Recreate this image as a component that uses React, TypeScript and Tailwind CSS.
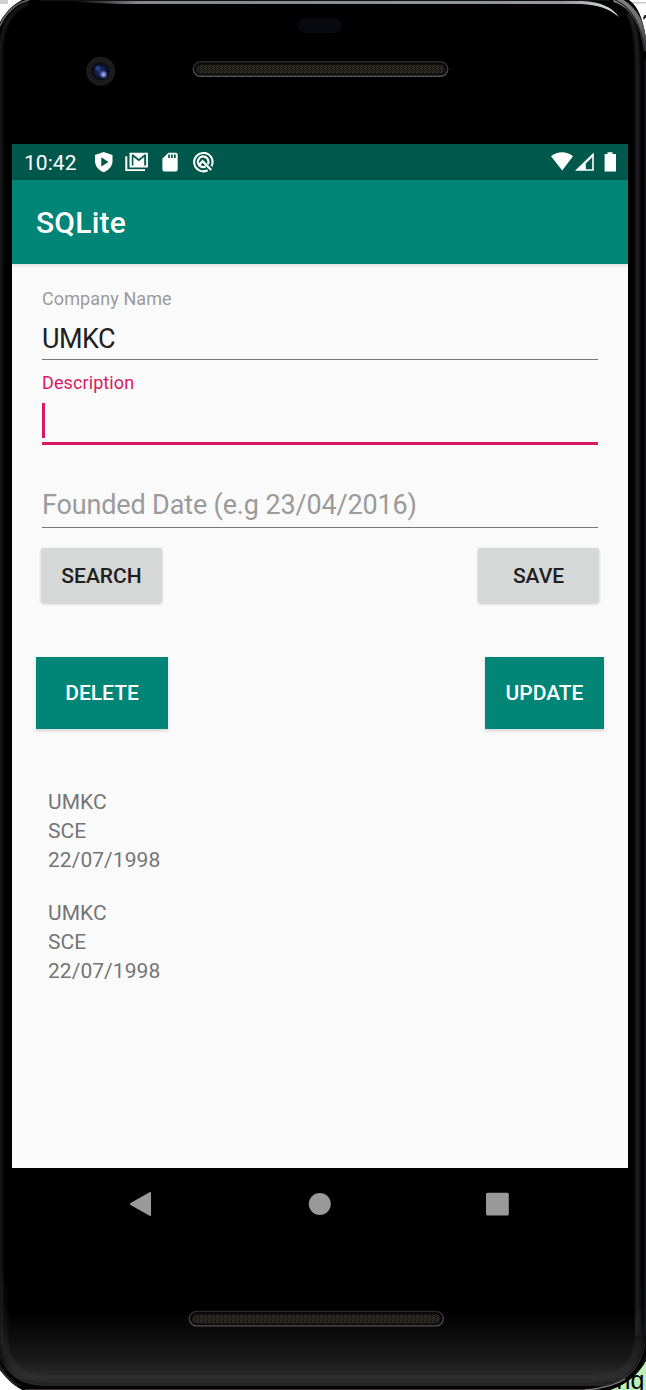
import type { ReactNode } from "react";

function Speaker({ x, y, w }: { x: number; y: number; w: number }) {
  return (
    <g>
      <rect x={x} y={y} width={w} height={14.5} rx={7.2} fill="#090909" stroke="url(#slotEdge)" strokeWidth="1.4" />
      <rect x={x + 3} y={y + 3} width={w - 6} height={9} rx={4.5} fill="url(#mesh)" />
    </g>
  );
}

function DeviceFrame() {
  return (
    <svg className="absolute inset-0" width="646" height="1390" viewBox="0 0 646 1390" aria-hidden="true">
      <defs>
        <linearGradient id="slotEdge" x1="0" y1="0" x2="0" y2="1">
          <stop offset="0" stopColor="#292929" />
          <stop offset="1" stopColor="#555452" />
        </linearGradient>
        <pattern id="mesh" width="4" height="4" patternUnits="userSpaceOnUse">
          <rect width="4" height="4" fill="#1b1916" />
          <path d="M0 0h1v1H0zM2 1h1v1H2zM0 2h1v1H0zM2 3h1v1H2z" fill="#383530" />
          <path d="M1 0h1v4H1z" fill="#26231f" />
        </pattern>
        <linearGradient id="bottomGlow" x1="0" y1="0" x2="0" y2="1">
          <stop offset="0" stopColor="#0a0a0a" stopOpacity="0" />
          <stop offset="0.3" stopColor="#0b0b0b" />
          <stop offset="0.65" stopColor="#191919" />
          <stop offset="0.88" stopColor="#2b2b2b" />
          <stop offset="1" stopColor="#1c1c1c" />
        </linearGradient>
        <linearGradient id="rimFade" gradientUnits="userSpaceOnUse" x1="0" y1="1270" x2="0" y2="1370">
          <stop offset="0" stopColor="#303030" stopOpacity="0" />
          <stop offset="1" stopColor="#303030" stopOpacity="0.5" />
        </linearGradient>
        <filter id="soft" filterUnits="userSpaceOnUse" x="-20" y="-20" width="686" height="1430">
          <feGaussianBlur stdDeviation="1.3" />
        </filter>
        <linearGradient id="topShine">
          <stop offset="0" stopColor="#888b8d" stopOpacity="0" />
          <stop offset="0.12" stopColor="#85888b" />
          <stop offset="0.9" stopColor="#96999c" />
          <stop offset="1" stopColor="#dde3e2" />
        </linearGradient>
        <linearGradient id="cornerShine" x1="0" y1="0" x2="1" y2="1">
          <stop offset="0" stopColor="#868686" />
          <stop offset="0.6" stopColor="#6d6b6c" />
          <stop offset="1" stopColor="#302f31" />
        </linearGradient>
        <radialGradient id="lens">
          <stop offset="0" stopColor="#26346f" />
          <stop offset="0.6" stopColor="#121a43" />
          <stop offset="1" stopColor="#05060d" />
        </radialGradient>
        <radialGradient id="glint">
          <stop offset="0" stopColor="#b0bdfb" />
          <stop offset="0.5" stopColor="#6272bd" />
          <stop offset="1" stopColor="#6272bd" stopOpacity="0" />
        </radialGradient>
        <clipPath id="body">
          <path d="M26 -2H626C638 5 643 17 647 44V1359C640 1372 629 1385 604 1392H27C13 1387 6 1377 -2 1368V26C3 15 12 4 26 -2Z" />
        </clipPath>
      </defs>
      <path d="M0 0h8v4H0z" fill="#d2d2d2" />
      <path d="M625 2h21v1.5H625z" fill="#c9c9c9" />
      <path d="M643 18l1.5-3H646v3h-1l-1 2z" fill="#222" />
      <path d="M600 1355h46v35h-46z" fill="#bdefba" />
      <text x="616.5" y="1388.5" fontSize="25" fontFamily="Liberation Sans" fill="#050505">ng</text>
      <g clipPath="url(#body)">
        <rect width="646" height="1390" fill="#000" />
        <rect x="0" y="1310" width="646" height="76" fill="url(#bottomGlow)" />
        <g filter="url(#soft)" fill="none">
          <path d="M1 1345V45C3 25 12 10 28 3" stroke="#191919" strokeWidth="4" />
          <path d="M628 13C636 25 637.5 45 637.5 70V1335" stroke="#1b1b1b" strokeWidth="5" />
          <path d="M646 60V1335" stroke="#24252b" strokeWidth="2" />
          <path d="M4 1260V1340C7 1364 20 1378 44 1379H595C622 1378 637 1365 639 1336V1260" stroke="url(#rimFade)" strokeWidth="8" />
        </g>
        <path d="M-2 1350C2 1372 15 1387 42 1388H600C627 1386 643 1372 647 1342" fill="none" stroke="#050505" strokeWidth="4" />
        <path d="M0 1354C3 1370 17 1382 40 1385H603C626 1383 641 1369 645 1342" fill="none" stroke="#333" strokeWidth="0.7" />
        <path d="M25 1389.5H600" stroke="#3c3335" strokeWidth="1" />
        <path d="M585 1390C605 1388 617 1384 625 1379" fill="none" stroke="#858386" strokeWidth="1.4" />
        <path d="M0 26C5 13 16 3 29 0" fill="none" stroke="#616161" strokeWidth="1.7" />
        <path d="M614 -1C633 5 643 22 647 51" fill="none" stroke="url(#cornerShine)" strokeWidth="6" />
        <path d="M615 0C632 7 641 25 645 51" fill="none" stroke="#252525" strokeWidth="1.2" />
      </g>
      <path d="M40 0H610" stroke="#242424" strokeWidth="1" />
      <path d="M73 1H582C601 2 612 7 619 17C608 8 598 5 581 4H120L73 2Z" fill="url(#topShine)" />
      <rect x="297" y="18" width="45" height="15" rx="7.5" fill="#08090e" />
      <circle cx="100.7" cy="71.3" r="14.5" fill="#1b1a1a" />
      <circle cx="100.7" cy="71.3" r="13" fill="none" stroke="#272525" strokeWidth="1.2" strokeDasharray="1 1.4" />
      <circle cx="100.5" cy="71.3" r="8.7" fill="url(#lens)" />
      <circle cx="103.5" cy="74.5" r="4.2" fill="url(#glint)" />
      <circle cx="97.7" cy="68.3" r="2.5" fill="#33509b" opacity="0.7" />
      <Speaker x={193.3} y={61.8} w={254.5} />
      <Speaker x={189.3} y={1311.4} w={254} />
    </svg>
  );
}

function StatusBar() {
  return (
    <div className="flex h-9 items-center bg-[#00574b] pl-3 text-white">
      <span className="mt-0.5 w-[67px] text-[21px] leading-9 tracking-[0.05px]">10:42</span>
      <svg width="126" height="36" viewBox="79 0 126 36">
        <path fill="#fff" fillRule="evenodd" d="M91.7 8L100.5 11.1V17.2C100.5 22.3 96.5 26.4 91.7 28.3C86.9 26.4 83 22.3 83 17.2V11.1ZM89.3 13.3V22.6L96.5 18Z" />
        <path fill="#fff" d="M113.3 12.2H115.3V25.2H133V27H113.3Z" />
        <path fill="#fff" fillRule="evenodd" d="M117.5 8.8H135.9V23.5H117.5ZM119.8 10.6V21.6H121.4V13L126.8 17.3L132.2 13V21.6H134.1V10.6H132.5L126.8 15L121.3 10.6Z" />
        <path fill="#fff" fillRule="evenodd" d="M156.5 8.7H163.8Q165.7 8.7 165.7 10.5V25.5Q165.7 27.4 163.8 27.4H152.3Q150.4 27.4 150.4 25.5V14.5ZM156.2 10.6V14H157.9V10.6ZM159.1 10.6V14H160.8V10.6ZM162 10.6V14H163.7V10.6Z" />
        <path d="M199.6 22.2A9.2 9.2 0 1 0 195.6 26.3" fill="none" stroke="#fff" strokeWidth="2.1" />
        <path d="M193.6 22.5A5.3 5.3 0 1 1 195.9 20.2M187.6 20.4L190.6 17.2L199.2 26" fill="none" stroke="#fff" strokeWidth="2.2" />
      </svg>
      <svg className="ml-auto" width="80" height="36" viewBox="536 0 80 36">
        <path fill="#fff" d="M539 12.2C545.5 6.8 554.5 6.8 561 12.2L550.2 26.4Z" />
        <path fill="#fff" fillRule="evenodd" d="M581.8 8.5V26.8H563ZM580.2 13.2L573.8 19.5V25.2H580.2Z" />
        <path fill="#fff" d="M595.5 8.3H600.5V10H604V27.4H592.6V10H595.5Z" />
      </svg>
    </div>
  );
}

type FieldProps = { label?: string; value?: string; hint?: string; focused?: boolean };

function Field({ label, value, hint, focused }: FieldProps) {
  return (
    <div className="flex h-[84px] flex-col pt-[11px]">
      <div className={focused ? "h-6 text-[18px] leading-6 tracking-[0.1px] text-[#d81b60]" : "h-6 text-[18px] leading-6 tracking-[0.1px] text-[#9b9b9b]"}>{label}</div>
      {focused ? (
        <div className="mt-2 h-9 w-[2.7px] bg-[#d81b60]" />
      ) : (
        <div className={value ? "mt-[10px] h-9 text-[27px] leading-9 tracking-[-0.5px] text-[#202020]" : "mt-2 mb-0.5 h-9 text-[27px] leading-9 tracking-[-0.15px] text-[#9b9b9b]"}>{value ?? hint}</div>
      )}
      <div className={focused ? "mt-[3px] h-[3px] shrink-0 translate-y-px bg-[#d81b60]" : "mt-[2px] h-[1.5px] bg-[#767676]"} />
    </div>
  );
}

function GreyButton({ children }: { children: ReactNode }) {
  return (
    <button className="h-[55px] w-[121px] rounded-[3px] bg-[#d6d7d7] pt-[3px] text-[21px] font-medium text-[#202020] shadow-[0_1px_3px_rgba(0,0,0,0.2)]">
      {children}
    </button>
  );
}

const rows = [
  ["UMKC", "SCE", "22/07/1998"],
  ["UMKC", "SCE", "22/07/1998"],
];

export default function App() {
  return (
    <div className="relative h-[1390px] w-[646px] overflow-hidden bg-white px-3 pt-36 font-[Roboto,sans-serif]">
      <DeviceFrame />
      <div className="relative flex h-[1024px] w-[616px] flex-col bg-[#fafafa]">
        <StatusBar />
        <header className="flex h-[84px] shrink-0 items-center bg-[#008577] pt-px pl-6 text-[30px] font-medium tracking-[0.2px] text-white shadow-[0_1px_4px_rgba(0,0,0,0.15)]">
          SQLite
        </header>
        <main className="flex flex-col pt-3">
          <div className="mr-[30px] ml-[30px]">
            <Field label="Company Name" value="UMKC" />
            <Field label="Description" focused />
            <Field hint="Founded Date (e.g 23/04/2016)" />
          </div>
          <div className="mt-5 mr-[29px] ml-[29px] flex justify-between">
            <GreyButton>SEARCH</GreyButton>
            <GreyButton>SAVE</GreyButton>
          </div>
          <div className="mt-[53.5px] flex justify-between px-6">
            <button className="h-[72px] w-[132px] bg-[#008577] pt-[3px] text-[21px] font-medium text-white shadow-[0_2px_3px_rgba(0,0,0,0.15)]">DELETE</button>
            <button className="h-[72px] w-[119px] bg-[#008577] pt-[3px] text-[21px] font-medium text-white shadow-[0_2px_3px_rgba(0,0,0,0.15)]">UPDATE</button>
          </div>
          <ul className="mt-[59.5px] flex flex-col gap-6 pl-9 text-[21px] leading-[29px] tracking-[0.05px] text-[#757575]">
            {rows.map((row, i) => (
              <li key={i}>
                {row.map((line) => (
                  <div key={line}>{line}</div>
                ))}
              </li>
            ))}
          </ul>
        </main>
      </div>
      <nav className="relative flex h-[72px] w-[616px] items-center justify-center">
        <svg width="616" height="72" viewBox="12 0 616 72" fill="#999">
          <path d="M150 24Q151 23.5 151 25V47Q151 48.5 150 48L130.5 37Q129 36 130.5 35Z" />
          <circle cx="319.8" cy="36" r="11" />
          <rect x="486" y="24.7" width="22.8" height="22.8" rx="1.5" />
        </svg>
      </nav>
    </div>
  );
}
